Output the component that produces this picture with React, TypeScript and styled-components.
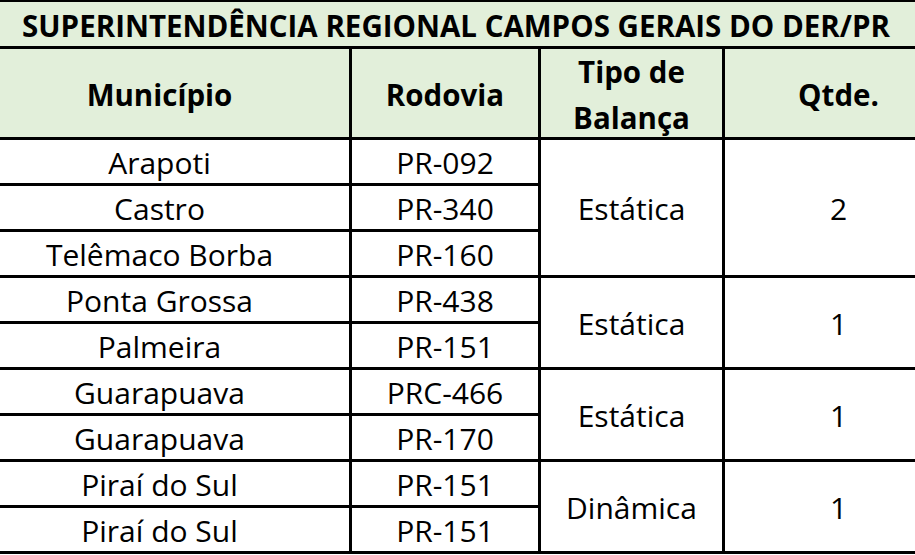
import React from "react";
import styled, { createGlobalStyle } from "styled-components";

const Global = createGlobalStyle`
  html, body { margin: 0; padding: 0; background: #fff; }
  body { font-family: "Open Sans", "Lato", sans-serif; color: #000; }
`;

const Frame = styled.div`
  width: 915px;
  height: 555px;
  overflow: hidden;
`;

const Grid = styled.div`
  display: grid;
  width: 982px;
  margin-left: -30px;
  grid-template-columns: 379px 186px 181px 227px;
  grid-template-rows: 44px 88px repeat(9, 43px);
  gap: 3px;
  padding: 2px 0 3px;
  background: #000;
`;

const Cell = styled.div<{ $head?: boolean; $span?: number; $col?: number; $rows?: number }>`
  display: flex;
  align-items: center;
  justify-content: center;
  text-align: center;
  background: ${(p) => (p.$head ? "#e2efda" : "#fff")};
  font-weight: ${(p) => (p.$head ? 700 : 400)};
  font-size: ${(p) => (p.$head ? "29.5px" : "30px")};
  line-height: ${(p) => (p.$head ? "46px" : "40px")};
  padding-top: 3px;
  box-sizing: border-box;
  ${(p) => (p.$span ? `grid-column: span ${p.$span};` : "")}
  ${(p) => (p.$col ? `grid-column-start: ${p.$col};` : "")}
  ${(p) => (p.$rows ? `grid-row: span ${p.$rows};` : "")}
`;

const Title = styled(Cell)`
  font-size: 29.5px;
  line-height: 40px;
  padding-top: 4px;
  padding-right: 10px;
`;

type Group = { rows: [string, string][]; tipo: string; qtd: string };

const groups: Group[] = [
  { rows: [["Arapoti", "PR-092"], ["Castro", "PR-340"], ["Telêmaco Borba", "PR-160"]], tipo: "Estática", qtd: "2" },
  { rows: [["Ponta Grossa", "PR-438"], ["Palmeira", "PR-151"]], tipo: "Estática", qtd: "1" },
  { rows: [["Guarapuava", "PRC-466"], ["Guarapuava", "PR-170"]], tipo: "Estática", qtd: "1" },
  { rows: [["Piraí do Sul", "PR-151"], ["Piraí do Sul", "PR-151"]], tipo: "Dinâmica", qtd: "1" },
];

export default function App() {
  return (
    <>
      <Global />
      <Frame>
        <Grid>
          <Title $head $span={4}>SUPERINTENDÊNCIA REGIONAL CAMPOS GERAIS DO DER/PR</Title>
          <Cell $head>Município</Cell>
          <Cell $head>Rodovia</Cell>
          <Cell $head>Tipo de<br />Balança</Cell>
          <Cell $head>Qtde.</Cell>
          {groups.map((g, gi) =>
            g.rows.map((r, ri) => (
              <React.Fragment key={`${gi}-${ri}`}>
                <Cell $col={1}>{r[0]}</Cell>
                <Cell>{r[1]}</Cell>
                {ri === 0 && (
                  <>
                    <Cell $rows={g.rows.length}>{g.tipo}</Cell>
                    <Cell $rows={g.rows.length}>{g.qtd}</Cell>
                  </>
                )}
              </React.Fragment>
            ))
          )}
        </Grid>
      </Frame>
    </>
  );
}
